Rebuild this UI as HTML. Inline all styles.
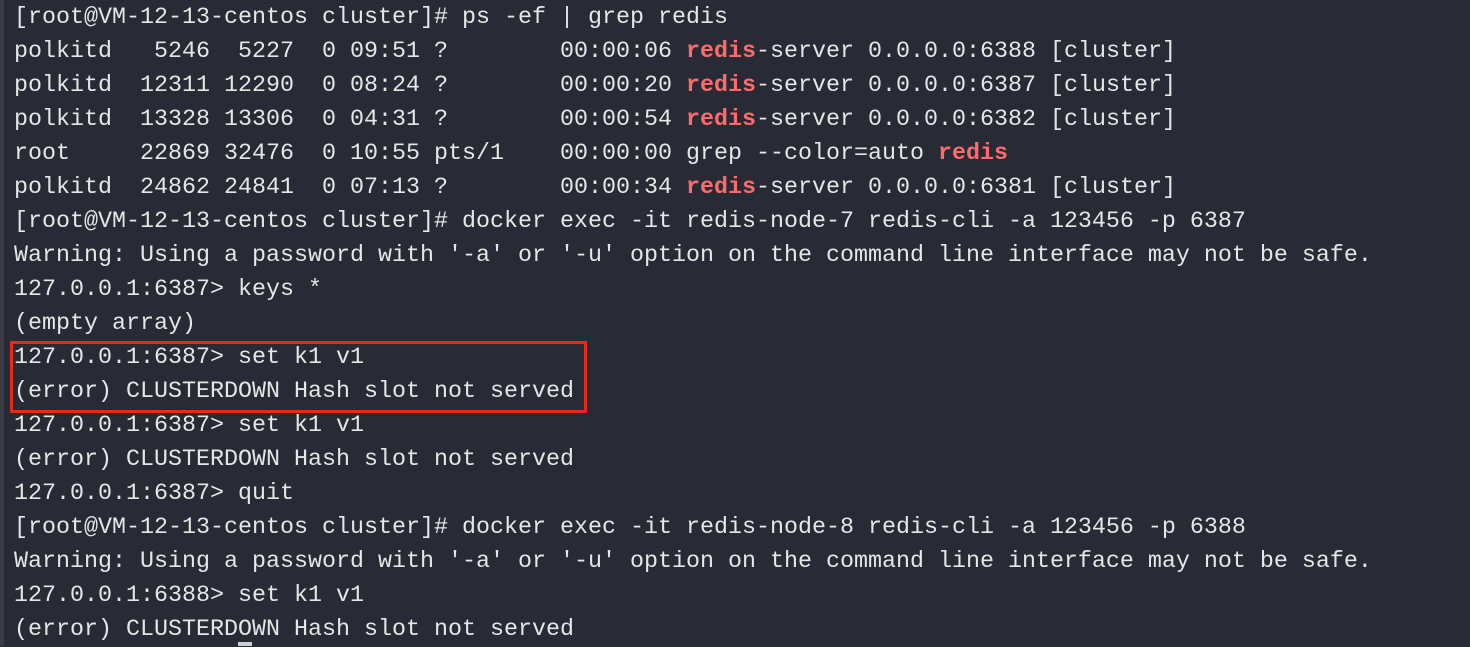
<!DOCTYPE html>
<html><head><meta charset="utf-8"><style>
html,body{margin:0;padding:0;}
body{width:1470px;height:646px;background:#282a35;overflow:hidden;position:relative;}
.edge{position:absolute;left:0;top:0;width:4px;height:646px;background:#3a3c47;}
pre{margin:0;position:absolute;left:14px;top:1px;font-family:"Liberation Mono",monospace;font-size:23.33px;line-height:34px;color:#e6e6e6;}
.r{color:#ff6b6b;font-weight:bold;}
.box{position:absolute;left:10px;top:341px;width:571px;height:66px;border:3px solid #e8291c;}
.cur{position:absolute;left:238px;top:642px;width:14px;height:4px;background:#cfcfcf;}
</style></head><body>
<div class="edge"></div>
<pre>[root@VM-12-13-centos cluster]# ps -ef | grep redis
polkitd   5246  5227  0 09:51 ?        00:00:06 <span class="r">redis</span>-server 0.0.0.0:6388 [cluster]
polkitd  12311 12290  0 08:24 ?        00:00:20 <span class="r">redis</span>-server 0.0.0.0:6387 [cluster]
polkitd  13328 13306  0 04:31 ?        00:00:54 <span class="r">redis</span>-server 0.0.0.0:6382 [cluster]
root     22869 32476  0 10:55 pts/1    00:00:00 grep --color=auto <span class="r">redis</span>
polkitd  24862 24841  0 07:13 ?        00:00:34 <span class="r">redis</span>-server 0.0.0.0:6381 [cluster]
[root@VM-12-13-centos cluster]# docker exec -it redis-node-7 redis-cli -a 123456 -p 6387
Warning: Using a password with '-a' or '-u' option on the command line interface may not be safe.
127.0.0.1:6387> keys *
(empty array)
127.0.0.1:6387> set k1 v1
(error) CLUSTERDOWN Hash slot not served
127.0.0.1:6387> set k1 v1
(error) CLUSTERDOWN Hash slot not served
127.0.0.1:6387> quit
[root@VM-12-13-centos cluster]# docker exec -it redis-node-8 redis-cli -a 123456 -p 6388
Warning: Using a password with '-a' or '-u' option on the command line interface may not be safe.
127.0.0.1:6388> set k1 v1
(error) CLUSTERDOWN Hash slot not served</pre>
<div class="box"></div>
<div class="cur"></div>
</body></html>
